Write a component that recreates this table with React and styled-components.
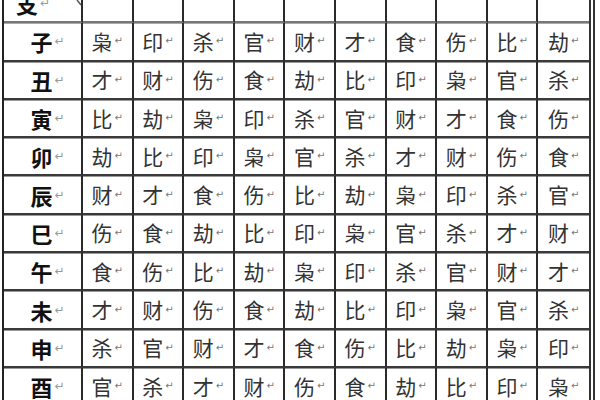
import React from 'react';
import styled, {createGlobalStyle} from 'styled-components';

const GlobalStyle = createGlobalStyle`
  html, body {
    margin: 0;
    padding: 0;
    background: #fff;
  }
  body {
    font-family: "Noto Sans CJK SC", "Noto Sans", sans-serif;
  }
`;

const Frame = styled.div`
  width: 600px;
  height: 400px;
  overflow: hidden;
  position: relative;
  background: #fff;
`;

const Grid = styled.div`
  display: grid;
  grid-template-columns: 79px repeat(10, 1fr);
  grid-auto-rows: 38.3px;
  width: 585px;
  margin-top: -15px;
  margin-left: 2px;
  border-left: 2px solid #222;
  border-right: 6px double #333;
`;

const Cell = styled.div`
  display: flex;
  align-items: center;
  justify-content: ${p => (p.$left ? 'flex-start' : 'center')};
  padding-left: ${p => (p.$left ? '12px' : p.$branch ? '10px' : '0')};
  border-right: ${p => (p.$last ? 'none' : '2px solid #2a2a2a')};
  border-bottom: 2px solid ${p => (p.$head ? '#777' : '#3a3a3a')};
  box-shadow: 0 1px 0 ${p => (p.$head ? '#aaa' : '#999')};
  color: ${p => (p.$branch ? '#111' : '#333')};
  font-size: ${p => (p.$branch ? '22px' : '21px')};
  font-weight: ${p => (p.$branch ? 700 : 400)};
  line-height: 1;
  white-space: nowrap;
`;

const Mark = styled.span`
  font-size: ${p => (p.$big ? '12px' : '10px')};
  color: ${p => (p.$big ? '#999' : '#777')};
  margin-left: 2px;
  font-weight: 400;
  font-family: "DejaVu Sans", sans-serif;
`;

const Slash = styled.svg`
  position: absolute;
  left: 74px;
  top: 0;
`;

const rows = [
  ['子', '枭', '印', '杀', '官', '财', '才', '食', '伤', '比', '劫'],
  ['丑', '才', '财', '伤', '食', '劫', '比', '印', '枭', '官', '杀'],
  ['寅', '比', '劫', '枭', '印', '杀', '官', '财', '才', '食', '伤'],
  ['卯', '劫', '比', '印', '枭', '官', '杀', '才', '财', '伤', '食'],
  ['辰', '财', '才', '食', '伤', '比', '劫', '枭', '印', '杀', '官'],
  ['巳', '伤', '食', '劫', '比', '印', '枭', '官', '杀', '才', '财'],
  ['午', '食', '伤', '比', '劫', '枭', '印', '杀', '官', '财', '才'],
  ['未', '才', '财', '伤', '食', '劫', '比', '印', '枭', '官', '杀'],
  ['申', '杀', '官', '财', '才', '食', '伤', '比', '劫', '枭', '印'],
  ['酉', '官', '杀', '才', '财', '伤', '食', '劫', '比', '印', '枭']
];

export default function App() {
  return (
    <Frame>
      <GlobalStyle/>
      <Grid>
        <Cell $head $left $branch>支<Mark $big>↵</Mark></Cell>
        {Array.from({length: 10}).map((_, i) => (
          <Cell key={'h' + i} $head $last={i === 9}/>
        ))}
        {rows.map(row => row.map((ch, i) => (
          <Cell key={row[0] + i} $branch={i === 0} $last={i === 10}>
            {ch}<Mark $big={i === 0}>↵</Mark>
          </Cell>
        )))}
      </Grid>
      <Slash width="10" height="8" viewBox="0 0 10 8">
        <line x1="3" y1="0" x2="7" y2="5" stroke="#555" strokeWidth="1.5"/>
      </Slash>
    </Frame>
  );
}
